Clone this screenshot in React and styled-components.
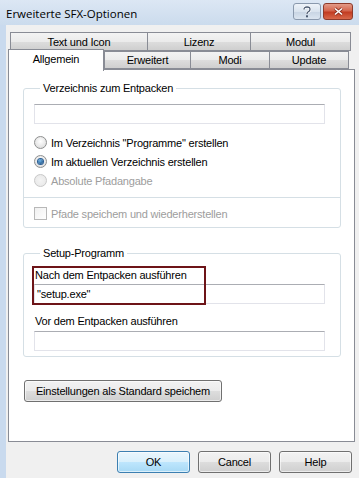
import React from "react";
import styled, { createGlobalStyle } from "styled-components";

const Global = createGlobalStyle`
  html, body { margin: 0; padding: 0; }
  body {
    width: 359px;
    height: 478px;
    overflow: hidden;
    font-family: "Liberation Sans", Arial, sans-serif;
    font-size: 11px;
    letter-spacing: -0.2px;
    color: #000;
  }
`;

const Window = styled.div`
  width: 359px;
  height: 478px;
  display: flex;
  flex-direction: column;
`;

const TitleBar = styled.div`
  height: 25px;
  flex: none;
  display: flex;
  align-items: center;
  justify-content: space-between;
  padding: 0 6px 0 6px;
  box-sizing: border-box;
  background: linear-gradient(#dce7f4, #cbdbed);
`;

const Title = styled.div`
  font-family: "Open Sans", "Liberation Sans", sans-serif;
  font-size: 11.5px;
  letter-spacing: 0;
  color: #000;
  margin-top: 1px;
`;

const CaptionButtons = styled.div`
  display: flex;
  gap: 2px;
  align-self: flex-start;
  margin-top: 3px;
`;

const CaptionButton = styled.div`
  width: ${p => (p.$close ? 30 : 28)}px;
  height: 17px;
  box-sizing: border-box;
  border: 1px solid ${p => (p.$close ? "#8d3a2b" : "#8a99ad")};
  border-radius: 3px;
  display: flex;
  align-items: center;
  justify-content: center;
  background: ${p =>
    p.$close
      ? "linear-gradient(#e39a88, #d4654d 45%, #c23c22 55%, #d8684a)"
      : "linear-gradient(#eef3f9, #d9e3ee 50%, #c7d4e3 51%, #dbe5f0)"};
`;

const Body = styled.div`
  flex: 1;
  display: flex;
  flex-direction: column;
  background: #f0f0f0;
  border-left: 6px solid #c9daee;
  padding: 7px 4px 0 2px;
  box-sizing: border-box;
`;

const TabRow = styled.div`
  display: flex;
  padding-left: ${p => p.$indent}px;
  height: ${p => p.$h}px;
  align-items: flex-end;
`;

const Tab = styled.div`
  width: ${p => p.$w}px;
  height: ${p => (p.$active ? p.$h + 4 : p.$h)}px;
  box-sizing: border-box;
  border: 1px solid #898c95;
  border-right: ${p => (p.$last || p.$active ? "1px solid #898c95" : "none")};
  border-bottom: ${p => (p.$active ? "none" : "1px solid #898c95")};
  background: ${p => (p.$active ? "#fff" : "linear-gradient(#f3f3f3, #ebebeb 50%, #dddddd 51%, #cfcfcf)")};
  display: flex;
  align-items: center;
  justify-content: center;
  padding-bottom: ${p => (p.$active ? 4 : 0)}px;
  margin-bottom: ${p => (p.$active ? -2 : 0)}px;
  position: relative;
  z-index: ${p => (p.$active ? 2 : 0)};
  font-size: 11px;
`;

const Panel = styled.div`
  height: 373px;
  box-sizing: border-box;
  background: #fff;
  border: 1px solid #898c95;
  padding: 12px 13px 0 14px;
  display: flex;
  flex-direction: column;
  position: relative;
  z-index: 1;
`;

const Group = styled.fieldset`
  margin: 0;
  border: 1px solid #d5dfe5;
  border-radius: 3px;
  padding: 0 15px 0 10px;
  display: flex;
  flex-direction: column;
  height: ${p => p.$h}px;
  box-sizing: border-box;
  margin-top: ${p => p.$mt || 0}px;
`;

const Legend = styled.legend`
  padding: 0 3px;
  margin-left: 6px;
  font-size: 11px;
  line-height: 13px;
`;

const TextBox = styled.div`
  height: 20px;
  box-sizing: border-box;
  border: 1px solid #e2e3ea;
  border-top-color: #abadb3;
  background: #fff;
  margin-top: ${p => p.$mt || 0}px;
  display: flex;
  align-items: center;
  padding-left: 2px;
  font-size: 11px;
`;

const OptionRow = styled.div`
  display: flex;
  align-items: center;
  gap: 4px;
  height: 19px;
  font-size: 11px;
  color: ${p => (p.$disabled ? "#9d9d9d" : "#000")};
`;

const RadioDot = styled.span`
  width: 13px;
  height: 13px;
  box-sizing: border-box;
  border-radius: 50%;
  border: 1px solid ${p => (p.$disabled ? "#c8c8c8" : "#8e8f8f")};
  background: ${p =>
    p.$disabled
      ? "radial-gradient(#f4f4f4, #e6e6e6)"
      : "radial-gradient(circle at 50% 40%, #ffffff, #d6d6d6)"};
  display: flex;
  align-items: center;
  justify-content: center;
  &::after {
    content: "";
    display: ${p => (p.$checked ? "block" : "none")};
    width: 5px;
    height: 5px;
    border-radius: 50%;
    background: radial-gradient(circle at 40% 35%, #6fb4e8, #0d3f74);
    box-shadow: 0 0 0 1px #2a5e94;
  }
`;

const CheckBox = styled.span`
  width: 13px;
  height: 13px;
  box-sizing: border-box;
  border: 1px solid #b8b8b8;
  background: linear-gradient(135deg, #f0f0f0, #ffffff);
`;

const Separator = styled.div`
  height: 1px;
  background: #d5dfe5;
  margin: 7px -15px 6px -10px;
`;

const FieldLabel = styled.div`
  font-size: 11px;
  line-height: 13px;
  margin-top: ${p => p.$mt || 0}px;
  padding-left: 1px;
`;

const Highlight = styled.div`
  position: absolute;
  left: 23px;
  top: 196px;
  width: 174px;
  height: 39px;
  box-sizing: border-box;
  border: 2px solid #6d1418;
  pointer-events: none;
`;

const PushButton = styled.button`
  font-family: "Liberation Sans", Arial, sans-serif;
  font-size: 11px;
  letter-spacing: -0.2px;
  white-space: nowrap;
  height: 22px;
  box-sizing: border-box;
  border: 1px solid ${p => (p.$default ? "#3c7fb1" : "#707070")};
  border-radius: 3px;
  background: ${p =>
    p.$default
      ? "linear-gradient(#eaf6fd, #d9f0fc 50%, #bee6fd 51%, #a7d9f5)"
      : "linear-gradient(#f2f2f2, #ebebeb 50%, #dddddd 51%, #cfcfcf)"};
  box-shadow: inset 0 0 0 1px rgba(255, 255, 255, 0.6);
  color: #000;
  padding: 0 6px;
  width: ${p => (p.$w ? `${p.$w}px` : "auto")};
`;

const StandardButton = styled(PushButton)`
  align-self: flex-start;
  margin-top: 23px;
  margin-left: 1px;
  width: 198px;
`;

const Footer = styled.div`
  display: flex;
  justify-content: flex-end;
  gap: 8px;
  padding: 9px 3px 0 0;
`;

const HelpGlyph = () => (
  <svg width="10" height="12" viewBox="0 0 10 12">
    <path
      d="M2 3.5 Q2 1 5 1 Q8 1 8 3.5 Q8 5 6 6 Q5 6.6 5 8"
      fill="none"
      stroke="#fff"
      strokeWidth="2.6"
    />
    <path
      d="M2 3.5 Q2 1 5 1 Q8 1 8 3.5 Q8 5 6 6 Q5 6.6 5 8"
      fill="none"
      stroke="#4a5970"
      strokeWidth="1.3"
    />
    <rect x="4" y="9.3" width="2" height="2" fill="#4a5970" />
  </svg>
);

const CloseGlyph = () => (
  <svg width="13" height="11" viewBox="0 0 13 11">
    <path d="M3 2.5 L10 8.5 M10 2.5 L3 8.5" stroke="#8a2e1e" strokeWidth="3" />
    <path d="M3 2.5 L10 8.5 M10 2.5 L3 8.5" stroke="#ffffff" strokeWidth="1.6" />
  </svg>
);

const topTabs = [
  { label: "Text und Icon", w: 137 },
  { label: "Lizenz", w: 103 },
  { label: "Modul", w: 101 },
];

const bottomTabs = [
  { label: "Allgemein", w: 96, active: true },
  { label: "Erweitert", w: 86 },
  { label: "Modi", w: 79 },
  { label: "Update", w: 80 },
];

export default function App() {
  return (
    <Window>
      <Global />
      <TitleBar>
        <Title>Erweiterte SFX-Optionen</Title>
        <CaptionButtons>
          <CaptionButton>
            <HelpGlyph />
          </CaptionButton>
          <CaptionButton $close>
            <CloseGlyph />
          </CaptionButton>
        </CaptionButtons>
      </TitleBar>
      <Body>
        <TabRow $indent={2} $h={19}>
          {topTabs.map((t, i) => (
            <Tab key={t.label} $w={t.w} $h={19} $last={i === topTabs.length - 1}>
              {t.label}
            </Tab>
          ))}
        </TabRow>
        <TabRow $indent={0} $h={18}>
          {bottomTabs.map((t, i) => (
            <Tab
              key={t.label}
              $w={t.w}
              $h={18}
              $active={t.active}
              $last={i === bottomTabs.length - 1}
            >
              {t.label}
            </Tab>
          ))}
        </TabRow>
        <Panel>
          <Group $h={146}>
            <Legend>Verzeichnis zum Entpacken</Legend>
            <TextBox $mt={9} />
            <div style={{ height: 9 }} />
            <OptionRow>
              <RadioDot />
              Im Verzeichnis "Programme" erstellen
            </OptionRow>
            <OptionRow>
              <RadioDot $checked />
              Im aktuellen Verzeichnis erstellen
            </OptionRow>
            <OptionRow $disabled>
              <RadioDot $disabled />
              Absolute Pfadangabe
            </OptionRow>
            <Separator />
            <OptionRow $disabled>
              <CheckBox />
              Pfade speichem und wiederherstellen
            </OptionRow>
          </Group>
          <Group $h={110} $mt={19}>
            <Legend>Setup-Programm</Legend>
            <FieldLabel $mt={9}>Nach dem Entpacken ausführen</FieldLabel>
            <TextBox $mt={2}>"setup.exe"</TextBox>
            <FieldLabel $mt={11}>Vor dem Entpacken ausführen</FieldLabel>
            <TextBox $mt={3} />
          </Group>
          <StandardButton>Einstellungen als Standard speichem</StandardButton>
          <Highlight />
        </Panel>
        <Footer>
          <PushButton $default $w={73}>OK</PushButton>
          <PushButton $w={73}>Cancel</PushButton>
          <PushButton $w={73}>Help</PushButton>
        </Footer>
      </Body>
    </Window>
  );
}
